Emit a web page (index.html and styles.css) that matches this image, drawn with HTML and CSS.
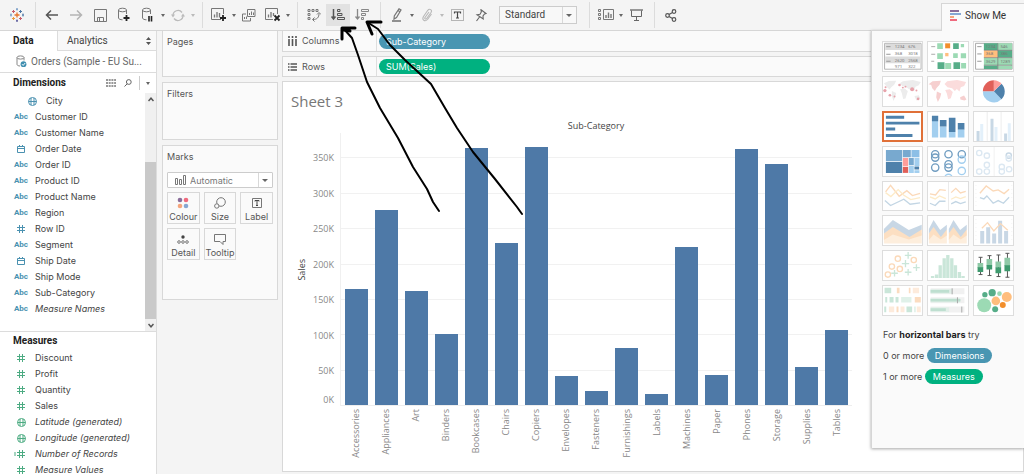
FILE: index.html
```html
<!DOCTYPE html>
<html lang="en">
<head>
<meta charset="utf-8">
<title>Sheet 3</title>
<meta name="viewport" content="width=device-width, initial-scale=1">
<link rel="stylesheet" href="styles.css">
</head>
<body>
<div class="app">
  <header class="toolbar">
    <button class="tool" aria-label="Start page"><svg width="14" height="14" viewBox="0 0 14 14" fill="none" stroke-width="1"><path stroke="#e8762d" stroke-width="1.300" d="M7 4.500v5M4.500 7h5"/><path stroke="#c75b6b" d="M3.500 2v3M2 3.500h3M10.500 9v3M9 10.500h3"/><path stroke="#eb9b3f" d="M3.500 9v3M2 10.500h3"/><path stroke="#4e79a7" d="M10.500 2v3M9 3.500h3M13 5.500v3M12 7h2"/><path stroke="#7199c4" d="M7 0v2.500M6 1.200h2M1 5.500v3M0 7h2"/><path stroke="#59579b" d="M7 11.500V14M6 12.800h2"/></svg></button>
    <span class="sep"></span>
    <button class="tool" aria-label="Undo"><svg width="14" height="12" viewBox="0 0 14 12" fill="none" stroke="#555" stroke-width="1.500"><path d="M13 6H1.500M6 1.500 1.500 6 6 10.500"/></svg></button>
    <button class="tool" aria-label="Redo"><svg width="14" height="12" viewBox="0 0 14 12" fill="none" stroke="#b4b4b4" stroke-width="1.500"><path d="M1 6h11.500M8 1.500 12.500 6 8 10.500"/></svg></button>
    <button class="tool" aria-label="Save"><svg width="13" height="13" viewBox="0 0 13 13" fill="none" stroke="#777"><path d="M.5.5h12v12H.5zM3.500 12V8.500h6V12M5.500 9v3"/></svg></button>
    <button class="tool" aria-label="New data source"><svg width="14" height="16" viewBox="0 0 14 16" fill="none" stroke="#777"><ellipse cx="5.500" cy="3" rx="4" ry="1.800"/><path d="M1.500 3v8c0 1 2 1.800 4 1.800M9.500 3v4"/><path stroke="#222" stroke-width="1.800" d="M9.500 8v6M6.500 11h6"/></svg></button>
    <button class="tool" aria-label="Pause auto updates"><svg width="14" height="16" viewBox="0 0 14 16" fill="none" stroke="#777"><ellipse cx="5.500" cy="3" rx="4" ry="1.800"/><path d="M1.500 3v8c0 1 2 1.800 4 1.800M9.500 3v4"/><path stroke="#222" stroke-width="1.600" d="M8 9v5.500M10.500 9v5.500"/></svg></button>
    <button class="caret" aria-label="Update options"></button>
    <button class="tool" aria-label="Run update"><svg width="14" height="13" viewBox="0 0 14 13" fill="none" stroke="#bbb" stroke-width="1.300"><path d="M2 6.500a5 5 0 0 1 9-3M12 6.500a5 5 0 0 1-9 3"/><path fill="#bbb" stroke="none" d="M0 5.500h4L2 8.500zM10 7.500h4L12 4.500z"/></svg></button>
    <button class="caret faint" aria-label="Run options"></button>
    <span class="sep"></span>
    <button class="tool" aria-label="New worksheet"><svg width="16" height="14" viewBox="0 0 16 14" fill="none" stroke="#777"><path d="M10 11.500H.5v-11h12V6"/><path stroke-width="1.300" d="M3.500 9.500V6.500M6 9.500V4M8.500 9.500V5"/><path stroke="#222" stroke-width="1.800" d="M12 7v6M9 10h6"/></svg></button>
    <button class="caret" aria-label="New worksheet options"></button>
    <button class="tool" aria-label="Duplicate"><svg width="14" height="13" viewBox="0 0 14 13" fill="none" stroke="#777"><path d="M5.500.5h7.500v7H5.500zM4 5H.5v7h8V9M7.500 6V4M9.500 6V2.500M11.500 6V3.500M2.500 10V8M4.500 10V7.500"/></svg></button>
    <button class="tool" aria-label="Clear sheet"><svg width="16" height="14" viewBox="0 0 16 14" fill="none" stroke="#777"><path d="M8 11.500H.5v-11h12V6"/><path stroke-width="1.300" d="M3.500 9.500V6.500M6 9.500V4M8.500 8V5"/><path stroke="#222" stroke-width="1.800" d="M9.500 7.500l5 5M14.500 7.500l-5 5"/></svg></button>
    <button class="caret" aria-label="Clear options"></button>
    <span class="sep"></span>
    <button class="tool" aria-label="Swap rows and columns"><svg width="14" height="14" viewBox="0 0 14 14" fill="none" stroke="#777"><path d="M1 1.500h2v2H1zM5 1.500h2v2H5zM9 1.500h2v2H9zM1 5.500h2v2H1zM1 9.500h2v2H1z"/><path d="M12 5.500c0 4-2 6-6 6M10 6.500l2-2 2 2M7.500 9.500l-2 2 2 2"/></svg></button>
    <button class="tool active" aria-label="Sort ascending"><svg width="14" height="14" viewBox="0 0 14 14" fill="none" stroke="#555"><path stroke-width="1.500" d="M2.500 1v10M.5 8.500l2 2.500 2-2.500"/><path d="M6.500 1.500h2.500v2H6.500zM6.500 5.500h4.500v2H6.500zM6.500 9.500h7v2h-7z"/></svg></button>
    <button class="tool" aria-label="Sort descending"><svg width="14" height="14" viewBox="0 0 14 14" fill="none" stroke="#888"><path stroke-width="1.300" d="M2.500 1v10M.5 8.500l2 2.500 2-2.500"/><path d="M6.500 1.500h7v2h-7zM6.500 5.500h4v2h-4zM6.500 9.500h2v2h-2z"/></svg></button>
    <span class="sep"></span>
    <button class="tool" aria-label="Highlight"><svg width="12" height="14" viewBox="0 0 12 14" fill="none" stroke="#777"><path stroke-width="1.200" d="M8 .8l2 1.200-4.500 7.500-2.500 1.500.3-3zM7 2.500l2 1.200"/><path stroke-width="1.600" d="M1 13h9"/></svg></button>
    <button class="caret" aria-label="Highlight options"></button>
    <button class="tool" aria-label="Group members"><svg width="12" height="14" viewBox="0 0 12 14" fill="none" stroke="#b8b8b8" stroke-width="1.100"><path d="M8 4 4 9.500c-.7 1.200.8 2.200 1.700 1L10 4.500c1.600-2.500-1.500-4.500-3.200-2.200L2.500 8.500C.5 12 4 14.200 6.500 11.500L10.500 6"/></svg></button>
    <button class="caret faint" aria-label="Group options"></button>
    <button class="tool" aria-label="Show mark labels"><svg width="13" height="12" viewBox="0 0 13 12" fill="none" stroke="#777"><path stroke-dasharray="1 1" d="M.5.5h12v11H.5z"/><path stroke="#444" stroke-width="1.200" d="M3.500 4.500V3h6v1.500M6.500 3v6M5 9h3"/></svg></button>
    <button class="tool" aria-label="Fix axes"><svg width="12" height="13" viewBox="0 0 12 13" fill="none" stroke="#666" stroke-width="1.100"><path d="M6 .8 11 4.500 9.500 5 8 7l.2 3L2 5.800l3-.6L6.300 3zM4.500 8 1.500 12"/></svg></button>
    <span class="select fit"><select aria-label="Fit"><option>Standard</option></select></span>
    <span class="sep"></span>
    <button class="tool" aria-label="Show cards"><svg width="16" height="12" viewBox="0 0 16 12" fill="none" stroke="#777"><path d="M.5.5h2v2h-2zM.5 4.500h2v2h-2zM.5 8.500h2v2h-2zM5.500.5h10v10h-10z"/><path stroke-width="1.400" d="M8 9V6M10.500 9V3.500M13 9V5"/></svg></button>
    <button class="caret" aria-label="Card options"></button>
    <button class="tool" aria-label="Presentation mode"><svg width="13" height="13" viewBox="0 0 13 13" fill="none" stroke="#666"><path stroke-width="1.300" d="M0 1h13"/><path d="M1.500 1.500v6h10v-6M6.500 7.500V11M4 11.500h5"/></svg></button>
    <span class="sep"></span>
    <button class="tool" aria-label="Share"><svg width="12" height="13" viewBox="0 0 12 13" fill="none" stroke="#555" stroke-width="1.200"><circle cx="2.500" cy="6.500" r="1.800"/><circle cx="9" cy="2.500" r="1.800"/><circle cx="9" cy="10.500" r="1.800"/><path d="M4 5.500 7.500 3.500M4 7.500l3.500 2"/></svg></button>
    <button class="showme-tab"><svg width="12" height="12" viewBox="0 0 12 12"><path fill="#8a6d9b" d="M0 0h9v2H0z"/><path fill="#86a7d3" d="M0 3h11v2H0z"/><path fill="#f5a57d" d="M0 6h4v2H0z"/><path fill="#ef6a7e" d="M0 9h7v2H0z"/></svg>Show Me</button>
  </header>

  <div class="body">
    <aside class="data">
      <div class="tabs">
        <button class="tab on">Data</button>
        <button class="tab">Analytics<svg width="5" height="8" viewBox="0 0 5 8"><path fill="#555" d="M0 3h5L2.500 0zM0 5h5L2.500 8z"/></svg></button>
      </div>
      <div class="source"><svg width="11" height="13" viewBox="0 0 11 13" fill="none" stroke="#888"><ellipse cx="4.500" cy="2.500" rx="3.500" ry="1.600"/><path d="M1 2.500v7c0 .8 1.500 1.500 3 1.500M8 2.500v3"/><circle cx="7.500" cy="9.200" r="2.900" fill="#3f8fb0" stroke="none"/><path stroke="#fff" d="M6 9.200l1.200 1.200L9.200 8"/></svg>Orders (Sample - EU Su...</div>
      <section class="dims">
        <div class="head">
          <h2>Dimensions</h2>
          <button class="mini" aria-label="View data"><svg width="10" height="8" viewBox="0 0 10 8"><path stroke="#777" stroke-width="1.500" stroke-dasharray="2 .7" d="M0 1h10M0 4h10M0 7h10"/></svg></button>
          <button class="mini" aria-label="Find field"><svg width="8" height="8" viewBox="0 0 8 8" fill="none" stroke="#666"><circle cx="4.800" cy="3" r="2.400"/><path d="M3.200 4.800.5 7.500"/></svg></button>
          <button class="caret menu" aria-label="Dimensions menu"></button>
        </div>
        <div class="scroller">
          <ul class="fields">
            <li class="nested"><i><svg width="9" height="9" viewBox="0 0 9 9" fill="none" stroke="currentColor"><circle cx="4.500" cy="4.500" r="4"/><path d="M3 .8v7.400M6 .8v7.400M.5 4.500h8"/></svg></i>City</li>
            <li><i>Abc</i>Customer ID</li>
            <li><i>Abc</i>Customer Name</li>
            <li><i><svg width="8" height="8" viewBox="0 0 8 8" fill="none" stroke="currentColor"><path d="M.5 1.500h7v6h-7zM.5 3.500h7M2.500 0v2M5.500 0v2"/></svg></i>Order Date</li>
            <li><i>Abc</i>Order ID</li>
            <li><i>Abc</i>Product ID</li>
            <li><i>Abc</i>Product Name</li>
            <li><i>Abc</i>Region</li>
            <li><i><svg width="8" height="8" viewBox="0 0 8 8" stroke="currentColor"><path d="M2.500 0v8M5.500 0v8M0 2.500h8M0 5.500h8"/></svg></i>Row ID</li>
            <li><i>Abc</i>Segment</li>
            <li><i><svg width="8" height="8" viewBox="0 0 8 8" fill="none" stroke="currentColor"><path d="M.5 1.500h7v6h-7zM.5 3.500h7M2.500 0v2M5.500 0v2"/></svg></i>Ship Date</li>
            <li><i>Abc</i>Ship Mode</li>
            <li><i>Abc</i>Sub-Category</li>
            <li class="gen"><i>Abc</i>Measure Names</li>
          </ul>
          <div class="bar">
            <button aria-label="Scroll up"><svg width="6" height="5" viewBox="0 0 6 5" fill="none" stroke="#555" stroke-width="1.500"><path d="M.5 4 3 1.200 5.500 4"/></svg></button>
            <span class="thumb"></span>
            <button aria-label="Scroll down"><svg width="6" height="5" viewBox="0 0 6 5" fill="none" stroke="#555" stroke-width="1.500"><path d="M.5 1 3 3.800 5.500 1"/></svg></button>
          </div>
        </div>
      </section>
      <section class="measures">
        <div class="head"><h2>Measures</h2></div>
        <ul class="fields green">
          <li><i><svg width="8" height="8" viewBox="0 0 8 8" stroke="currentColor"><path d="M2.500 0v8M5.500 0v8M0 2.500h8M0 5.500h8"/></svg></i>Discount</li>
          <li><i><svg width="8" height="8" viewBox="0 0 8 8" stroke="currentColor"><path d="M2.500 0v8M5.500 0v8M0 2.500h8M0 5.500h8"/></svg></i>Profit</li>
          <li><i><svg width="8" height="8" viewBox="0 0 8 8" stroke="currentColor"><path d="M2.500 0v8M5.500 0v8M0 2.500h8M0 5.500h8"/></svg></i>Quantity</li>
          <li><i><svg width="8" height="8" viewBox="0 0 8 8" stroke="currentColor"><path d="M2.500 0v8M5.500 0v8M0 2.500h8M0 5.500h8"/></svg></i>Sales</li>
          <li class="gen"><i><svg width="9" height="9" viewBox="0 0 9 9" fill="none" stroke="currentColor"><circle cx="4.500" cy="4.500" r="4"/><path d="M3 .8v7.400M6 .8v7.400M.5 4.500h8"/></svg></i>Latitude (generated)</li>
          <li class="gen"><i><svg width="9" height="9" viewBox="0 0 9 9" fill="none" stroke="currentColor"><circle cx="4.500" cy="4.500" r="4"/><path d="M3 .8v7.400M6 .8v7.400M.5 4.500h8"/></svg></i>Longitude (generated)</li>
          <li class="gen"><i><svg width="14" height="8" viewBox="0 0 14 8" stroke="currentColor"><path d="M5.500 0v8M8.500 0v8M3 2.500h8M3 5.500h8M0 3h2M0 5h2"/></svg></i>Number of Records</li>
          <li class="gen"><i><svg width="8" height="8" viewBox="0 0 8 8" stroke="currentColor"><path d="M2.500 0v8M5.500 0v8M0 2.500h8M0 5.500h8"/></svg></i>Measure Values</li>
        </ul>
      </section>
    </aside>

    <div class="cards">
      <section class="card pages"><h3>Pages</h3></section>
      <section class="card filters"><h3>Filters</h3></section>
      <section class="card marks">
        <h3>Marks</h3>
        <span class="select type"><svg width="11" height="10" viewBox="0 0 11 10" fill="none" stroke="#777"><path d="M.5 3.500h2v6h-2zM4.500 4.500h2v5h-2zM8.500.5h2v9h-2z"/></svg><select aria-label="Mark type"><option>Automatic</option></select></span>
        <div class="mark-grid">
          <button><svg width="12" height="12" viewBox="0 0 12 12"><circle cx="3" cy="3" r="2.300" fill="#8a6d9b"/><circle cx="9" cy="3" r="2.300" fill="#ef6a7e"/><circle cx="3" cy="9" r="2.300" fill="#f5a57d"/><circle cx="9" cy="9" r="2.300" fill="#86a7d3"/></svg>Colour</button>
          <button><svg width="12" height="12" viewBox="0 0 12 12" fill="none" stroke="#777"><circle cx="7" cy="5" r="4.300"/><circle cx="2.800" cy="9" r="2.200" fill="#fafafa"/></svg>Size</button>
          <button><svg width="12" height="12" viewBox="0 0 12 12" fill="none" stroke="#777"><path d="M1.500 1.500h9v9h-9z"/><path stroke="#444" d="M4 4.500V3.500h4v1M6 3.500V8M5 8.500h2"/></svg>Label</button>
          <button><svg width="12" height="12" viewBox="0 0 12 12" fill="none" stroke="#777"><circle cx="6" cy="4" r="1.700" fill="#444" stroke="none"/><circle cx="2" cy="9" r="1.300"/><circle cx="6" cy="9" r="1.300"/><circle cx="10" cy="9" r="1.300"/></svg>Detail</button>
          <button><svg width="12" height="12" viewBox="0 0 12 12" fill="none" stroke="#777"><path d="M.5 1.500h11v7H9v3l-3-3H.5z"/></svg>Tooltip</button>
        </div>
      </section>
    </div>

    <main class="work">
      <div class="shelf"><div class="name"><svg width="9" height="10" viewBox="0 0 9 10" stroke="#555" stroke-width="1.600"><path d="M1 0v2M4.500 0v2M8 0v2M1 3v7M4.500 3v7M8 3v7"/></svg>Columns</div><button class="pill blue">Sub-Category</button></div>
      <div class="shelf"><div class="name"><svg width="9" height="8" viewBox="0 0 9 8" stroke="#555" stroke-width="1.400"><path d="M0 1h1.500M0 4h1.500M0 7h1.500M2.500 1H9M2.500 4H9M2.500 7H9"/></svg>Rows</div><button class="pill green">SUM(Sales)</button></div>
      <section class="sheet">
        <h1>Sheet 3</h1>
        <div class="chart">
          <div class="col-title">Sub-Category</div>
          <div class="axis-title"><span>Sales</span></div>
          <div class="ticks"><span>350K</span><span>300K</span><span>250K</span><span>200K</span><span>150K</span><span>100K</span><span>50K</span><span>0K</span></div>
          <div class="plot">
            <b style="height:42.700%"></b><b style="height:71.800%"></b><b style="height:41.800%"></b><b style="height:26%"></b><b style="height:94.500%"></b><b style="height:59.700%"></b><b style="height:95%"></b><b style="height:10.600%"></b><b style="height:5.300%"></b><b style="height:21%"></b><b style="height:4.200%"></b><b style="height:58%"></b><b style="height:11.200%"></b><b style="height:94%"></b><b style="height:88.500%"></b><b style="height:13.900%"></b><b style="height:27.500%"></b>
          </div>
          <div class="cats"><span>Accessories</span><span>Appliances</span><span>Art</span><span>Binders</span><span>Bookcases</span><span>Chairs</span><span>Copiers</span><span>Envelopes</span><span>Fasteners</span><span>Furnishings</span><span>Labels</span><span>Machines</span><span>Paper</span><span>Phones</span><span>Storage</span><span>Supplies</span><span>Tables</span></div>
        </div>
      </section>
    </main>
  </div>

  <aside class="showme">
    <div class="gallery">
      <button aria-label="Text table"><svg viewBox="3 3 117 87"><path fill="#fff" stroke="#b5b5b5" stroke-width="3" d="M7 7h110v78H7z"/><path fill="#dcdcdc" d="M9 9h106v18H9zM9 47h106v20H9z"/><path stroke="#999" stroke-width="3" d="M12 17h13M12 40h13M12 61h13"/><g class="nums"><text x="38" y="22">1234</text><text x="78" y="22">676</text><text x="38" y="42">368</text><text x="78" y="42">3018</text><text x="38" y="62">2620</text><text x="78" y="62">2568</text><text x="38" y="81">971</text><text x="78" y="81">322</text></g></svg></button>
      <button aria-label="Heat map"><svg viewBox="3 3 117 87"><path stroke="#aaa" stroke-width="3" d="M12 17h12M12 40h12M12 61h9"/><path fill="#9cdab4" d="M30 7h17v17H30zM101 9h10v10h-10zM30 37h17v17H30zM78 37h14v14H78zM101 37h16v15h-16zM54 66h18v18H54zM102 66h15v17h-15z"/><path fill="#56ad88" d="M78 7h17v17H78zM31 64h21v20H31zM79 64h20v20H79z"/><path fill="#f28e2b" d="M54 7h15v15H54z"/><path fill="#ffbe7d" d="M54 36h10v10H54z"/></svg></button>
      <button aria-label="Highlight table"><svg viewBox="3 3 117 87"><path fill="#fff" stroke="#aaa" stroke-width="3" d="M7 7h110v78H7z"/><path fill="#56ad88" d="M32 7h42v20H32zM74 28h43v22H74zM32 74h42v10H32z"/><path fill="#9cdab4" d="M74 7h43v20H74zM32 51h42v21H32zM74 51h43v21H74zM74 74h43v10H74z"/><path fill="#ffbe7d" d="M32 28h42v22H32z"/><path stroke="#777" stroke-width="2" d="M32 28h85M32 50h85M32 73h85M74 7v78"/><path stroke="#999" stroke-width="3" d="M12 17h13M12 39h13M12 61h13"/><g class="nums"><text x="38" y="22">1234</text><text x="82" y="22">546</text><text x="38" y="43">368</text><text x="82" y="43">386</text><text x="38" y="65">3629</text><text x="82" y="65">1289</text></g></svg></button>
      <button aria-label="Symbol map"><svg viewBox="3 3 117 87"><path fill="#ececec" d="M5 22l15-7 22-1-6 12-9 8-5 7-8-8-5-7zM29 45l13 6-3 12-5 12-5-14zM53 22l9-6 30-4 24 6-6 10-10 4-4 13-8-8-6 4-10-8-12-3zM54 40l14-2 9 8-7 22-7 1-4-17zM97 60l13-2 5 10-12 6z"/><g fill="#e7a3ab"><circle cx="8" cy="44" r="5"/><circle cx="10" cy="34" r="3"/><circle cx="52" cy="27" r="4"/><circle cx="62" cy="35" r="3"/><circle cx="90" cy="40" r="6"/><circle cx="103" cy="44" r="3"/><circle cx="23" cy="58" r="4"/><circle cx="37" cy="62" r="3"/><circle cx="108" cy="69" r="4"/><circle cx="70" cy="32" r="3"/></g></svg></button>
      <button aria-label="Map"><svg viewBox="3 3 117 87"><path fill="#f6cfcf" d="M4 25l12-9 25-2-4 12-9 10-5 9-8-8-3-10zM29 47l13 6-3 12-7 13-5-14z"/><path fill="#fbdcdc" d="M52 24l8-8 30-4 27 6-6 12-10 4-4 13-8-8-6 6-8-8-14-3zM54 42l14-2 9 8-6 19-8 3-4-17z"/><path fill="#f6cfcf" d="M99 64l12-5 7 12-6 3-12-3z"/></svg></button>
      <button aria-label="Pie chart"><svg viewBox="3 3 117 87"><path fill="#a3cfef" d="M62 46H29a33 33 0 0 0 56 24z"/><path fill="#4e81ab" d="M62 46l23 24a33 33 0 0 0 0-47z"/><path fill="#ff9d9a" d="M62 46l23-23a33 33 0 0 0-23-10z"/><path fill="#e15f58" d="M62 46V13a33 33 0 0 0-33 33z"/></svg></button>
      <button class="chosen" aria-label="Horizontal bars"><svg viewBox="6 6 111 81"><path fill="#4e81ab" d="M11 14h55v9H11zM11 32h101v9H11zM11 50h28v9H11zM11 69h80v9H11z"/></svg></button>
      <button aria-label="Stacked bars"><svg viewBox="3 3 117 87"><path fill="#a3cfef" d="M14 30h19v50H14zM38 47h20v33H38zM65 63h20v17H65zM92 55h20v25H92z"/><path fill="#4e81ab" d="M14 14h19v17H14zM38 27h20v20H38zM65 20h20v43H65zM92 36h20v20H92z"/></svg></button>
      <button aria-label="Side-by-side bars"><svg viewBox="3 3 117 87"><path stroke="#e4e4e4" stroke-width="2" d="M42 3v87M84 3v87"/><path fill="#c8d8e5" d="M10 60h9v32h-9zM52 23h9v69h-9zM93 68h9v24h-9z"/><path fill="#e3f0fa" d="M21 39h9v53h-9zM64 48h9v44h-9zM104 37h9v55h-9z"/></svg></button>
      <button aria-label="Treemap"><svg viewBox="3 3 117 87"><path fill="#78a9cf" d="M11 12h49v34H11zM62 12h24v22H62zM80 36h15v22H80z"/><path fill="#4e81ab" d="M11 48h49v33H11zM97 62h14v9H97z"/><path fill="#8cbfe6" d="M88 12h24v22H88z"/><path fill="#ff9d9a" d="M62 36h16v25H62z"/><path fill="#e15f58" d="M62 63h16v18H62z"/><path fill="#a3cfef" d="M97 36h15v24H97zM80 60h15v21H80zM97 73h15v8H97z"/></svg></button>
      <button aria-label="Circle views"><svg viewBox="3 3 117 87" fill="none" stroke="#6f9cc0" stroke-width="4"><circle cx="24" cy="25" r="11"/><circle cx="24" cy="35" r="11"/><circle cx="24" cy="65" r="11"/><circle cx="64" cy="25" r="11"/><circle cx="64" cy="55" r="11"/><circle cx="64" cy="65" r="11"/><circle cx="104" cy="25" r="11"/><g stroke="#a3cfef"><circle cx="104" cy="41" r="11"/><circle cx="104" cy="75" r="11"/><circle cx="64" cy="96" r="11"/></g></svg></button>
      <button aria-label="Side-by-side circles"><svg viewBox="3 3 117 87" fill="none" stroke="#dce8f2" stroke-width="4"><path stroke="#e8e8e8" stroke-width="2" d="M63 3v87"/><circle cx="18" cy="21" r="8"/><circle cx="41" cy="29" r="8"/><circle cx="41" cy="57" r="8"/><circle cx="18" cy="77" r="8"/><circle cx="41" cy="77" r="8"/><circle cx="107" cy="29" r="8" stroke="#c8d8e5"/><circle cx="107" cy="38" r="8"/><circle cx="86" cy="63" r="8"/><circle cx="86" cy="77" r="8"/><circle cx="108" cy="70" r="8"/></svg></button>
      <button aria-label="Continuous lines"><svg viewBox="3 3 117 87" fill="none" stroke-width="4"><path stroke="#fbd9b9" d="M10 33 25 13l26 33 23-17 17 15 23-7"/><path stroke="#fdebc8" d="M10 35l16 12 22-21 16 16 22 14 28-6"/><path stroke="#c3d6e4" d="M8 59l17 15 40-19 19 15 30-4"/></svg></button>
      <button aria-label="Discrete lines"><svg viewBox="3 3 117 87" fill="none" stroke-width="4"><path stroke="#e0e0e0" stroke-width="2" d="M64 3v87"/><path stroke="#fbd9b9" d="M8 39l17 3 13-16 18 2M72 35l14-13 14 14 16-5"/><path stroke="#fdebc8" d="M8 48l16 6 13-9 19 8M72 55l14-7 14 5 16-6"/><path stroke="#c3d6e4" d="M8 67l16 7 13-13h18M72 69l14-7 14 6 16-5"/></svg></button>
      <button aria-label="Dual lines"><svg viewBox="3 3 117 87" fill="none" stroke-width="4"><path stroke="#ddd" stroke-width="4" stroke-dasharray="1 11" d="M8 12v70M116 12v70"/><path stroke="#fbd9b9" d="M20 37l19-22 21 15 15-3 18 11 15-13"/><path stroke="#c3d6e4" d="M20 50l12 4 9-9 19 22 15-8 16 8 17-18"/></svg></button>
      <button aria-label="Area chart, continuous"><svg viewBox="3 3 117 87"><path fill="#fdeedd" d="M5 65l27-15 50 20 37-16v32H5z"/><path fill="#fcdfc2" d="M5 55l27-22 50 25 37-15v19L80 74 32 59 5 75z"/><path fill="#c8d7e5" d="M5 42l27-27 48 30 39-16v15L82 66 32 36 5 56z"/></svg></button>
      <button aria-label="Area chart, discrete"><svg viewBox="3 3 117 87"><path fill="#fdeedd" d="M5 65l14-15 22 18 18-14v32H5zM65 65l14-15 22 18 18-14v32H65z"/><path fill="#fcdfc2" d="M5 55l14-22 22 25 18-15v19L41 74 19 59 5 75zM65 55l14-22 22 25 18-15v19l-18 12-22-15-14 16z"/><path fill="#c8d7e5" d="M5 42l14-27 20 30 20-16v15L41 66 19 36 5 56zM65 42l14-27 20 30 20-16v15l-18 22-22-30-14 20z"/></svg></button>
      <button aria-label="Dual combination"><svg viewBox="3 3 117 87" fill="none"><path stroke="#ddd" stroke-width="4" stroke-dasharray="1 11" d="M8 12v70M116 12v70"/><path fill="#c8d7e5" d="M21 48h12v38H21zM39 37h12v49H39zM57 56h12v30H57zM75 17h12v69H75zM93 48h12v38H93z"/><path stroke="#fbd9b9" stroke-width="4" d="M26 40l17-17 19 25 20-22 22 20"/></svg></button>
      <button aria-label="Scatter plot"><svg viewBox="3 3 117 87" fill="none" stroke-width="4"><g stroke="#fbd9b9"><circle cx="47" cy="26" r="8"/><circle cx="29" cy="50" r="8"/><circle cx="53" cy="57" r="8"/><circle cx="95" cy="30" r="8"/><circle cx="17" cy="74" r="8"/></g><path stroke="#cae6d9" d="M78 6v20M68 16h20M70 30v22M59 41h22M37 60v20M27 70h20M78 57v20M68 67h20M103 43v20M93 53h20"/></svg></button>
      <button aria-label="Histogram"><svg viewBox="3 3 117 87"><path fill="#cae6d9" d="M11 78h10v6H11zM23 74h10v10H23zM34 46h10v38H34zM46 25h10v59H46zM57 15h10v69H57zM69 25h10v59H69zM80 46h10v38H80zM92 66h10v18H92zM103 78h10v6h-10z"/></svg></button>
      <button aria-label="Box-and-whisker plot"><svg viewBox="3 3 117 87"><path fill="none" stroke="#555" stroke-width="3" d="M22 22v52M16 22h12M16 74h12M49 17v60M43 17h12M43 77h12M76 15v65M70 15h12M70 80h12M103 10v72M97 10h12M97 82h12"/><path fill="#8fc9a7" d="M13 39h17v15H13zM40 27h17v20H40zM67 35h17v18H67zM94 23h17v25H94z"/><path fill="#3e9a6e" d="M13 52h17v14H13zM40 45h17v14H40zM67 52h17v18H67zM94 46h17v18H94z"/></svg></button>
      <button aria-label="Gantt chart"><svg viewBox="3 3 117 87"><path fill="#cae6d9" d="M7 8h20v17H7zM9 36h6v17H9zM22 36h12v17H22zM40 36h9v17h-9zM73 65h17v17H73zM6 65h6v17H6z"/><path fill="#e0f1e9" d="M57 36h31v17H57zM96 65h5v17h-5z"/><path fill="#fbdcc0" d="M44 8h8v17h-8zM80 8h5v17h-5zM98 36h18v17H98zM43 65h6v17h-6z"/><path fill="#fdebdc" d="M92 8h19v17H92zM20 65h16v17H20zM55 65h12v17H55zM104 65h12v17h-12z"/></svg></button>
      <button aria-label="Bullet graph"><svg viewBox="3 3 117 87"><path fill="#f1f1f1" d="M10 10h102v18H10zM10 37h102v18H10zM10 65h102v18H10z"/><path fill="#e2efe9" d="M10 12h66v14H10zM10 39h88v14H10zM10 67h56v14H10z"/><path fill="#bedfd0" d="M10 15h56v8H10zM10 42h90v8H10zM10 70h46v8H10z"/><path stroke="#aaa" stroke-width="3" d="M75 10v18M91 37v18M104 65v18"/></svg></button>
      <button aria-label="Packed bubbles"><svg viewBox="3 3 117 87"><g fill="#9cdab4"><circle cx="33" cy="61" r="21"/><circle cx="79" cy="26" r="7"/></g><g fill="#56ad88"><circle cx="35" cy="29" r="8"/><circle cx="57" cy="23" r="11"/><circle cx="66" cy="73" r="9"/></g><g fill="#ffbe7d"><circle cx="68" cy="48" r="13"/><circle cx="101" cy="36" r="15"/></g><circle cx="89" cy="60" r="9" fill="#f28e2b"/></svg></button>
    </div>
    <p>For <strong>horizontal bars</strong> try</p>
    <p>0 or more <span class="pill blue">Dimensions</span></p>
    <p>1 or more <span class="pill green">Measures</span></p>
  </aside>

  <svg class="ink" width="1024" height="240" viewBox="0 0 1024 240" aria-hidden="true">
    <path d="M343 28 352 38 358 55 367 82 380 108 398 138 413 167 427 189 433 202 439 211"/>
    <path class="heavy" d="M342 39 342 28 355 28M344 30 350 31"/>
    <path d="M367 22 378 29 390 45 405 60 431 84 445 108 457 128 473 152 495 179 517 207 522 214"/>
    <path class="heavy" d="M381 22 367 22 372 34"/>
  </svg>
</div>
</body>
</html>
```
FILE: styles.css
```css
* { box-sizing: border-box; }

body {
  margin: 0;
  background: #f4f4f4;
  color: #444;
  font: 9px/16px Inter, "Liberation Sans", sans-serif;
}

button, select {
  font: inherit;
  color: inherit;
  border: 0;
  background: none;
  padding: 0;
  margin: 0;
}

h1, h2, h3, p, ul { margin: 0; padding: 0; font: inherit; }
ul { list-style: none; }
svg { display: block; flex: none; }

.app {
  position: relative;
  height: 100vh;
  display: flex;
  flex-direction: column;
  overflow: hidden;
}

.toolbar, .tabs, .source, .head h2 { font: 10px/16px Roboto, "Liberation Sans", sans-serif; }

/* Toolbar */
.toolbar {
  display: flex;
  align-items: center;
  flex: 0 0 31px;
  padding-left: 5px;
  border-bottom: 1px solid #d6d6d6;
}
.tool {
  width: 24px;
  height: 22px;
  display: flex;
  align-items: center;
  justify-content: center;
}
.tool.active { background: #e2e2e2; }
.sep {
  width: 1px;
  height: 26px;
  margin: 0 4px 0 6px;
  background: #dcdcdc;
}
.caret {
  width: 6px;
  height: 22px;
  display: flex;
  align-items: center;
  justify-content: center;
}
.caret::before, .select::after {
  content: "";
  border: 2px solid transparent;
  border-top: 3px solid #666;
  border-bottom: 0;
}
.caret.faint::before { border-top-color: #bbb; }

.select {
  position: relative;
  display: flex;
  align-items: center;
  height: 18px;
  border: 1px solid #ccc;
  background: linear-gradient(#d8d8d8, #d8d8d8) right 13px top / 1px 100% no-repeat #f8f8f8;
}
.select select { appearance: none; flex: 1; height: 16px; }
.select::after { position: absolute; right: 4px; top: 7px; border-width: 3px 3px 0; }
.fit { width: 78px; margin: 0 6px; padding-left: 5px; }
.showme-tab {
  display: flex;
  align-items: center;
  gap: 3px;
  align-self: flex-end;
  height: 28px;
  width: 83px;
  margin: 0 0 -1px auto;
  padding: 0 0 4px 8px;
  border: 1px solid #d6d6d6;
  border-width: 1px 0 0 1px;
  background: #fafafa;
  color: #333;
  z-index: 3;
}

.body { flex: 1; min-height: 0; display: flex; gap: 4px; }

/* Data pane */
.data {
  flex: 0 0 157px;
  margin-right: 1px;
  display: flex;
  flex-direction: column;
  background: #fff;
  border-right: 1px solid #dcdcdc;
  overflow: hidden;
}
.tabs { display: flex; flex: 0 0 20px; }
.tab { height: 20px; padding-left: 9px; text-align: left; }
.tab.on { width: 57px; padding-left: 13px; font-weight: 700; color: #222; }
.tab:not(.on) {
  flex: 1;
  display: flex;
  align-items: center;
  justify-content: space-between;
  padding-right: 5px;
  background: #f8f8f8;
  border-left: 1px solid #dcdcdc;
  border-bottom: 1px solid #dcdcdc;
}
.source {
  flex: 0 0 22px;
  display: flex;
  align-items: center;
  gap: 4px;
  padding-left: 16px;
  color: #666;
  border-bottom: 1px solid #dcdcdc;
}
.dims { flex: 0 0 259px; display: flex; flex-direction: column; border-bottom: 1px solid #dcdcdc; }
.head { display: flex; align-items: center; height: 20px; padding-left: 13px; }
.head h2 { flex: 1; font-weight: 700; color: #222; }
.mini { width: 17px; height: 16px; display: flex; align-items: center; justify-content: center; }
.head .menu { width: 17px; height: 14px; margin-left: 3px; border-left: 1px solid #ccc; }
.scroller { flex: 1; display: flex; }
.fields { flex: 1; }
.fields li { display: flex; align-items: center; height: 16px; padding-left: 13px; line-height: 12px; white-space: nowrap; }
.fields i {
  width: 16px;
  margin-right: 6px;
  display: flex;
  justify-content: center;
  font: 700 8px/12px Roboto, "Liberation Sans", sans-serif;
  color: #4a91b0;
}
.fields .nested { padding-left: 24px; }
.fields .gen { font-style: italic; }
.fields.green i { color: #4cab82; }
.bar { width: 11px; display: flex; flex-direction: column; background: #f0f0f0; }
.bar button { height: 12px; display: flex; align-items: center; justify-content: center; }
.thumb { flex: 1; margin-top: 57px; background: #c9c9c9; }
.measures .head { height: 18px; }

/* Cards */
.cards { flex: 0 0 116px; display: flex; flex-direction: column; gap: 5px; }
.card { border: 1px solid #d8d8d8; background: #fafafa; padding: 3px 4px; color: #555; }
.card.pages { height: 46px; border-top: 0; }
.card.filters { height: 58px; }
.card.marks { height: 155px; }
.marks .type { height: 16px; margin: 7px 0 4px; padding-left: 7px; gap: 4px; border-radius: 1px; color: #777; background-color: #fff; }
.marks .type select { height: 14px; }
.marks .type::after { top: 6px; }
.mark-grid { display: grid; grid-template-columns: repeat(3, 1fr); gap: 4px; }
.mark-grid button {
  height: 32px;
  min-width: 0;
  display: flex;
  flex-direction: column;
  align-items: center;
  justify-content: space-between;
  padding-top: 4px;
  line-height: 12px;
  border: 1px solid #d8d8d8;
  white-space: nowrap;
}

/* Worksheet */
.work { flex: 1; min-width: 0; display: flex; flex-direction: column; gap: 4px; padding-bottom: 2px; }
.shelf {
  display: flex;
  align-items: center;
  flex: 0 0 21px;
  gap: 2px;
  border: 1px solid #d8d8d8;
  background: #fafafa;
}
.shelf:first-child { border-top: 0; }
.shelf .name {
  width: 94px;
  height: 100%;
  display: flex;
  align-items: center;
  gap: 5px;
  padding-left: 5px;
  border-right: 1px solid #dedede;
  color: #555;
}
.pill { height: 15px; border-radius: 8px; padding: 0 8px; line-height: 15px; color: #fff; text-align: left; }
.pill.blue { background: #4996b2; }
.pill.green { background: #00b180; }
.shelf .pill { width: 111px; padding: 0 7px; }

.sheet {
  flex: 1;
  display: flex;
  flex-direction: column;
  background: #fff;
  border: 1px solid #d8d8d8;
  padding: 9px 171px 12px 8px;
  font-family: "Open Sans", "Noto Sans", sans-serif;
}
.sheet h1 { font-size: 15px; line-height: 20px; color: #777; }
.chart {
  flex: 1;
  display: grid;
  grid-template: 22px 1fr 53px / 20px 29px 1fr;
  font-size: 9px;
  line-height: 13px;
  color: #888;
}
.col-title { grid-area: 1 / 3; text-align: center; color: #444; padding-top: 8px; }
.axis-title { grid-area: 2 / 1; display: flex; align-items: center; justify-content: center; color: #444; }
.axis-title span, .cats span { writing-mode: vertical-rl; transform: rotate(180deg); }
.ticks { grid-area: 2 / 2; display: flex; flex-direction: column; padding: 7px 6px 0 0; }
.ticks span { flex: 2; display: flex; align-items: center; justify-content: flex-end; }
.ticks span:last-child { flex: 1; align-items: flex-end; }
.plot, .cats { grid-column: 3; display: grid; grid-template-columns: repeat(17, 1fr); justify-items: center; }
.plot {
  grid-row: 2;
  align-items: end;
  border-left: 1px solid #f0f0f0;
  border-bottom: 1px solid #eee;
  background: repeating-linear-gradient(to top, transparent 0, transparent calc(13% - 1px), #f1f1f1 calc(13% - 1px), #f1f1f1 13%);
}
.plot b { width: 23px; background: #4e79a7; }
.cats { grid-row: 3; padding-top: 3px; align-items: start; }

/* Show Me */
.showme {
  position: absolute;
  top: 30px;
  right: 0;
  width: 153px;
  height: 418px;
  padding: 10px 10px 0;
  background: #fafafa;
  border-left: 1px solid #d6d6d6;
  border-top: 1px solid #d6d6d6;
  box-shadow: 0 1px 3px rgba(0, 0, 0, .35);
  z-index: 2;
}
.gallery { display: grid; grid-template-columns: repeat(3, 1fr); grid-template-rows: repeat(8, 1fr); gap: 4px; height: 275px; margin-bottom: 11px; }
.gallery button { border: 1px solid #ddd; background: #fff; overflow: hidden; min-height: 0; }
.gallery svg { width: 100%; height: 100%; }
.gallery .chosen { border: 2px solid #e07038; }
.nums { font: 13px Roboto, sans-serif; fill: #777; }
.showme p { height: 21px; padding-left: 1px; line-height: 16px; }
.showme p .pill { display: inline-block; }
.showme strong { color: #222; }

/* Hand-drawn arrows over the sheet */
.ink { position: absolute; left: 0; top: 0; z-index: 4; pointer-events: none; fill: none; stroke: #000; stroke-width: 2; stroke-linecap: round; stroke-linejoin: round; }
.ink .heavy { stroke-width: 3; }
```
